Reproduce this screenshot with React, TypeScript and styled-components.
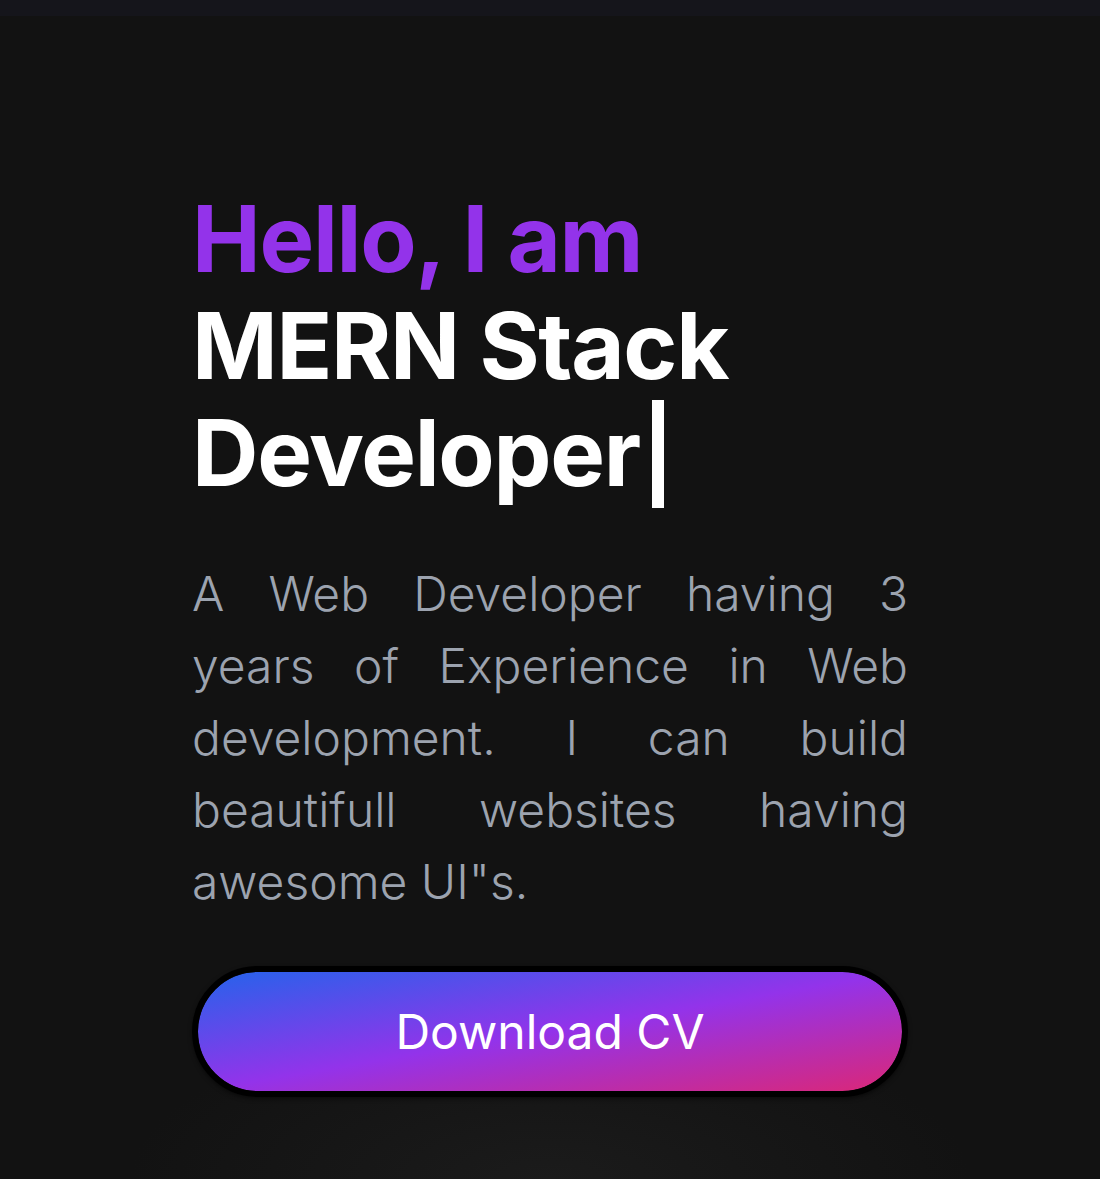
import React from "react";
import styled, { createGlobalStyle } from "styled-components";

const GlobalStyle = createGlobalStyle`
  html, body {
    margin: 0;
    padding: 0;
    background: #121212;
  }
  body {
    font-family: Inter, "Noto Sans", Roboto, sans-serif;
    -webkit-font-smoothing: antialiased;
  }
  * { box-sizing: border-box; }
`;

const Page = styled.div`
  min-height: 1179px;
  background: radial-gradient(ellipse 420px 160px at 50% 100%, #1b1b1b 0%, #121212 100%);
  display: flex;
  flex-direction: column;
`;

const TopBar = styled.div`
  height: 16px;
  background: #15151b;
`;

const Hero = styled.section`
  width: 716px;
  margin: 0 auto;
  padding-top: 169px;
  display: flex;
  flex-direction: column;
`;

const Heading = styled.h1`
  margin: 0;
  font-size: 92px;
  line-height: 107px;
  font-weight: 700;
  color: #ffffff;
  letter-spacing: -1.3px;
`;

const Accent = styled.span`
  color: #9333ea;
  display: block;
`;

const Cursor = styled.span`
  display: inline-block;
  width: 12px;
  height: 108px;
  margin-left: 12px;
  background: #ffffff;
  vertical-align: -22px;
`;

const Lead = styled.p`
  margin: 50px 0 0;
  font-size: 48px;
  line-height: 72px;
  font-weight: 300;
  color: #9ca3af;
  text-align: justify;
`;

const DownloadButton = styled.button`
  margin-top: 48px;
  width: 716px;
  height: 131px;
  border: 6px solid #000;
  border-radius: 999px;
  background: linear-gradient(to bottom right, #2563eb 0%, #9333ea 50%, #db2777 100%);
  background-clip: padding-box;
  color: #fff;
  font-family: Inter, "Noto Sans", sans-serif;
  font-size: 48px;
  font-weight: 400;
  cursor: pointer;
  box-shadow: 0 2px 4px rgba(0, 0, 0, 0.5);
`;

export default function App() {
  return (
    <>
      <GlobalStyle />
      <Page>
        <TopBar />
        <Hero>
          <Heading>
            <Accent>Hello, I am</Accent>
            MERN Stack Developer
            <Cursor />
          </Heading>
          <Lead>
            A Web Developer having 3 years of Experience in Web development. I can build
            beautifull websites having awesome UI"s.
          </Lead>
          <DownloadButton>Download CV</DownloadButton>
        </Hero>
      </Page>
    </>
  );
}
